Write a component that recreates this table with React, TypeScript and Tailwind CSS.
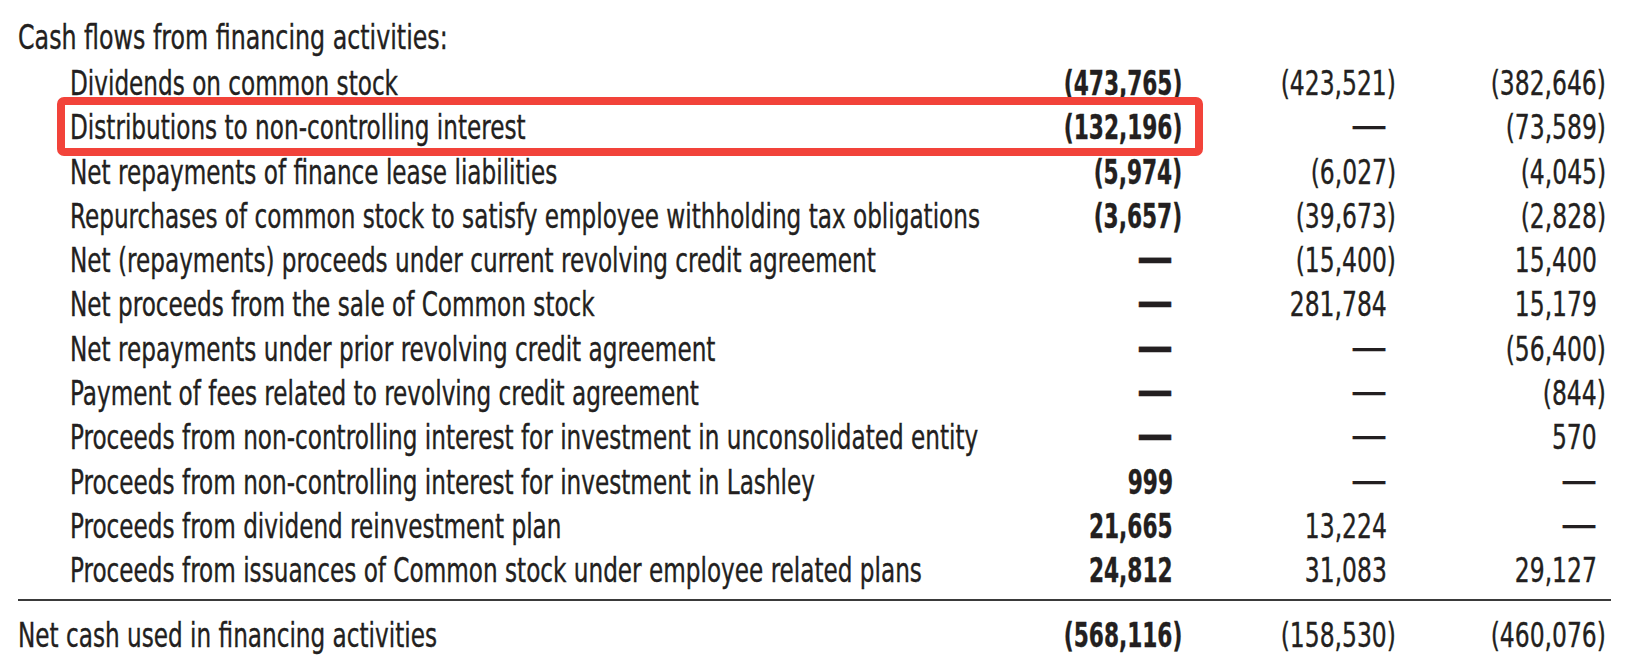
import React from 'react';

type Row = {
  label: string;
  values: [string, string, string];
  highlight?: boolean;
};

const rows: Row[] = [
  { label: 'Dividends on common stock', values: ['(473,765)', '(423,521)', '(382,646)'] },
  { label: 'Distributions to non-controlling interest', values: ['(132,196)', '—', '(73,589)'], highlight: true },
  { label: 'Net repayments of finance lease liabilities', values: ['(5,974)', '(6,027)', '(4,045)'] },
  { label: 'Repurchases of common stock to satisfy employee withholding tax obligations', values: ['(3,657)', '(39,673)', '(2,828)'] },
  { label: 'Net (repayments) proceeds under current revolving credit agreement', values: ['—', '(15,400)', '15,400'] },
  { label: 'Net proceeds from the sale of Common stock', values: ['—', '281,784', '15,179'] },
  { label: 'Net repayments under prior revolving credit agreement', values: ['—', '—', '(56,400)'] },
  { label: 'Payment of fees related to revolving credit agreement', values: ['—', '—', '(844)'] },
  { label: 'Proceeds from non-controlling interest for investment in unconsolidated entity', values: ['—', '—', '570'] },
  { label: 'Proceeds from non-controlling interest for investment in Lashley', values: ['999', '—', '—'] },
  { label: 'Proceeds from dividend reinvestment plan', values: ['21,665', '13,224', '—'] },
  { label: 'Proceeds from issuances of Common stock under employee related plans', values: ['24,812', '31,083', '29,127'] },
];

const total: [string, string, string] = ['(568,116)', '(158,530)', '(460,076)'];

// condensed face: the report type is much narrower than anything installed
const Label = ({ children, indent, wide }: { children: React.ReactNode; indent?: boolean; wide?: boolean }) => (
  <div className={`min-w-0 whitespace-nowrap ${indent ? 'pl-[52px]' : ''}`}>
    <span className={`inline-block origin-left ${wide ? 'scale-x-[0.8]' : 'scale-x-[0.78]'}`}>{children}</span>
  </div>
);

// numbers without a closing paren hang left of it, like a printed statement
const Cell = ({ value, bold }: { value: string; bold?: boolean }) => {
  if (value === '—') {
    return (
      <div className={`text-right pr-[14px] ${bold ? 'font-bold' : ''}`}>
        <span className="inline-block text-[40px] leading-none">—</span>
      </div>
    );
  }
  const hang = !value.endsWith(')');
  return (
    <div className={`text-right ${hang ? 'pr-[14px]' : 'pr-[5px]'} ${bold ? 'font-bold' : ''}`}>
      <span className={`inline-block origin-right ${bold ? 'scale-x-[0.73]' : 'scale-x-[0.79]'}`}>{value}</span>
    </div>
  );
};

const cols = 'grid grid-cols-[minmax(0,1fr)_214px_214px_210px] items-center';

export default function App() {
  return (
    <div
      className="w-[1640px] h-[665px] bg-white text-[#231f20] overflow-hidden [-webkit-text-stroke:0.35px_#231f20]"
      style={{ fontFamily: '"DejaVu Sans Condensed", "Liberation Sans Narrow", "Liberation Sans", sans-serif' }}
    >
      <div className="w-[1611px] pl-[18px] pt-[17px] text-[33px]">
        <div className="h-[42px] flex items-center">
          <Label wide>Cash flows from financing activities:</Label>
        </div>

        {rows.map((row) => (
          <div key={row.label} className={`relative h-[44.3px] ${cols}`}>
            {row.highlight && (
              <div className="absolute left-[39px] right-[408px] -top-[6px] -bottom-[8px] border-[8px] border-[#f2433a] rounded-[7px] pointer-events-none" />
            )}
            <Label indent>{row.label}</Label>
            <Cell value={row.values[0]} bold />
            <Cell value={row.values[1]} />
            <Cell value={row.values[2]} />
          </div>
        ))}

        <div className="mt-[8px] h-[2px] bg-[#3a3a3a]" />

        <div className={`mt-[10px] h-[44px] ${cols}`}>
          <Label>Net cash used in financing activities</Label>
          <Cell value={total[0]} bold />
          <Cell value={total[1]} />
          <Cell value={total[2]} />
        </div>
      </div>
    </div>
  );
}
